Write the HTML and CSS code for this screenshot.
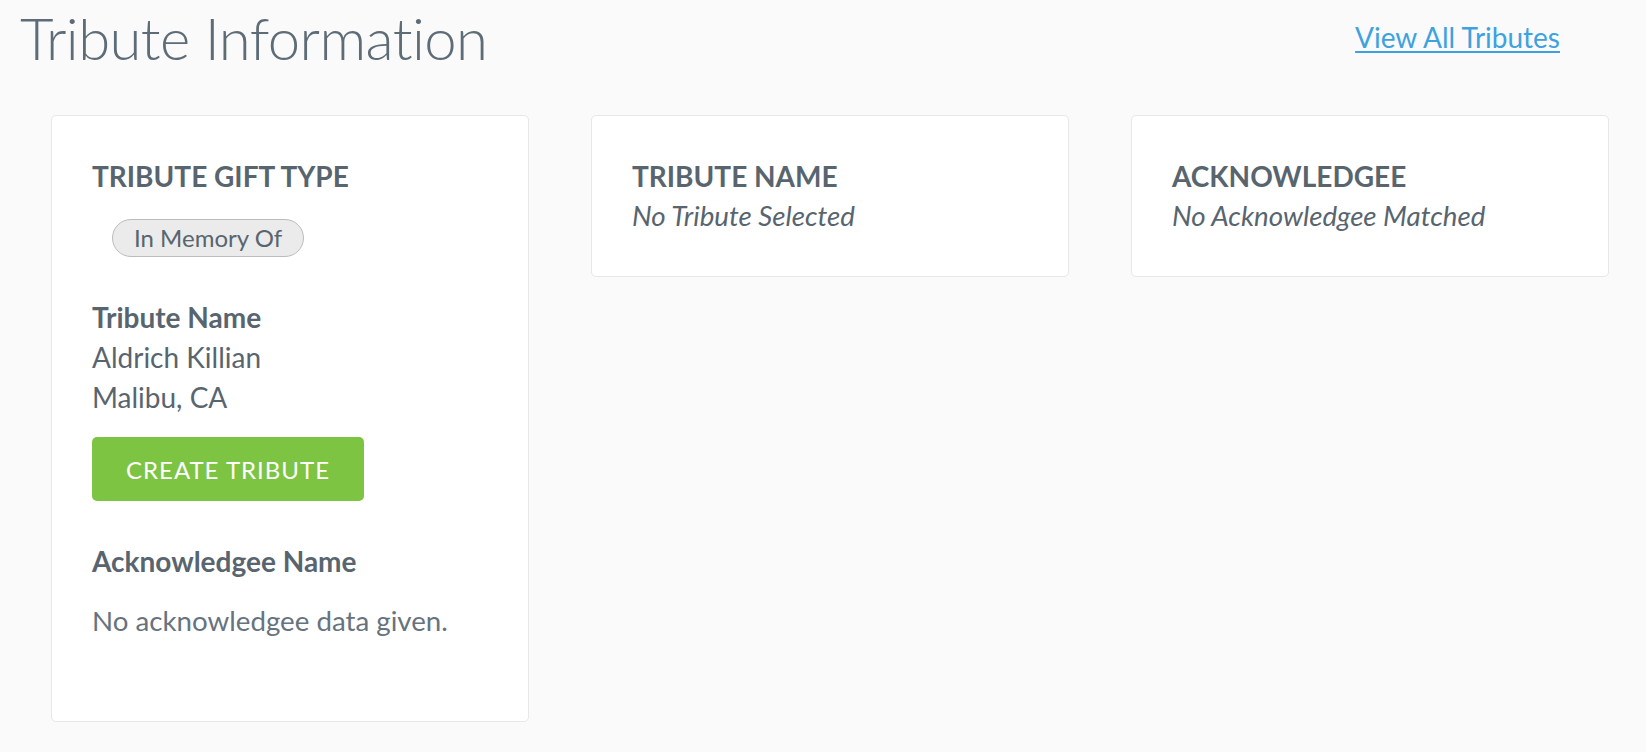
FILE: index.html
```html
<!DOCTYPE html>
<html lang="en">
<head>
<meta charset="utf-8">
<title>Tribute Information</title>
<link rel="stylesheet" href="styles.css">
</head>
<body>
<div class="page">
  <header class="page-header">
    <h1 class="page-title">Tribute Information</h1>
    <a class="view-all" href="#">View All Tributes</a>
  </header>
  <div class="cards">
    <section class="card">
      <h2 class="card-heading">TRIBUTE GIFT TYPE</h2>
      <span class="pill">In Memory Of</span>
      <div class="field">
        <div class="field-label">Tribute Name</div>
        <div class="field-value">Aldrich Killian</div>
        <div class="field-value">Malibu, CA</div>
      </div>
      <button class="btn-create" type="button">CREATE TRIBUTE</button>
      <div class="field ack">
        <div class="field-label">Acknowledgee Name</div>
        <p class="field-empty">No acknowledgee data given.</p>
      </div>
    </section>
    <section class="card">
      <h2 class="card-heading">TRIBUTE NAME</h2>
      <div class="card-note">No Tribute Selected</div>
    </section>
    <section class="card">
      <h2 class="card-heading">ACKNOWLEDGEE</h2>
      <div class="card-note">No Acknowledgee Matched</div>
    </section>
  </div>
</div>
</body>
</html>
```
FILE: styles.css
```css
html, body {
  margin: 0;
  padding: 0;
  background: #fafafa;
}

body {
  font-family: Lato, "Open Sans", "Liberation Sans", sans-serif;
  color: #58656f;
}

.page {
  padding: 0 0 0 20px;
}

.page-header {
  display: flex;
  justify-content: space-between;
  align-items: flex-start;
  padding-right: 86px;
  height: 115px;
}

.page-title {
  margin: 3px 0 0;
  font-size: 58px;
  font-weight: 300;
  letter-spacing: -0.6px;
  line-height: 70px;
  color: #5e6c78;
}

.view-all {
  margin-top: 17px;
  font-size: 28px;
  line-height: 40px;
  color: #3ea2df;
  text-decoration: underline;
  text-underline-offset: 3px;
  text-decoration-thickness: 2px;
}

.cards {
  margin-left: 31px;
  display: grid;
  grid-template-columns: repeat(3, 478px);
  column-gap: 62px;
  align-items: start;
}

.card {
  background: #fff;
  border: 1px solid #e8e8e8;
  border-radius: 5px;
  padding: 40px 40px 40px;
}

.card-heading {
  margin: 0;
  font-size: 28px;
  font-weight: 700;
  line-height: 40px;
  color: #58656f;
}

.pill {
  display: inline-block;
  margin: 23px 0 0 20px;
  padding: 0 21px;
  font-size: 24px;
  line-height: 36px;
  background: #ebebeb;
  border: 1px solid #bcbcbc;
  border-radius: 19px;
  color: #58656f;
}

.field {
  margin-top: 40px;
}

.field-label {
  font-size: 28px;
  font-weight: 700;
  line-height: 40px;
}

.field-value {
  font-size: 28px;
  line-height: 40px;
}

.btn-create {
  display: block;
  margin-top: 20px;
  width: 272px;
  height: 64px;
  padding: 0;
  border: none;
  border-radius: 5px;
  background: #7dc443;
  color: #fff;
  font-family: inherit;
  font-size: 24px;
  letter-spacing: 1px;
  cursor: pointer;
}

.ack {
  margin-top: 40px;
}

.field-empty {
  margin: 20px 0 40px;
  font-size: 27.7px;
  line-height: 40px;
  color: #66737e;
}

.card-note {
  font-size: 27.7px;
  font-style: italic;
  line-height: 40px;
}
```
